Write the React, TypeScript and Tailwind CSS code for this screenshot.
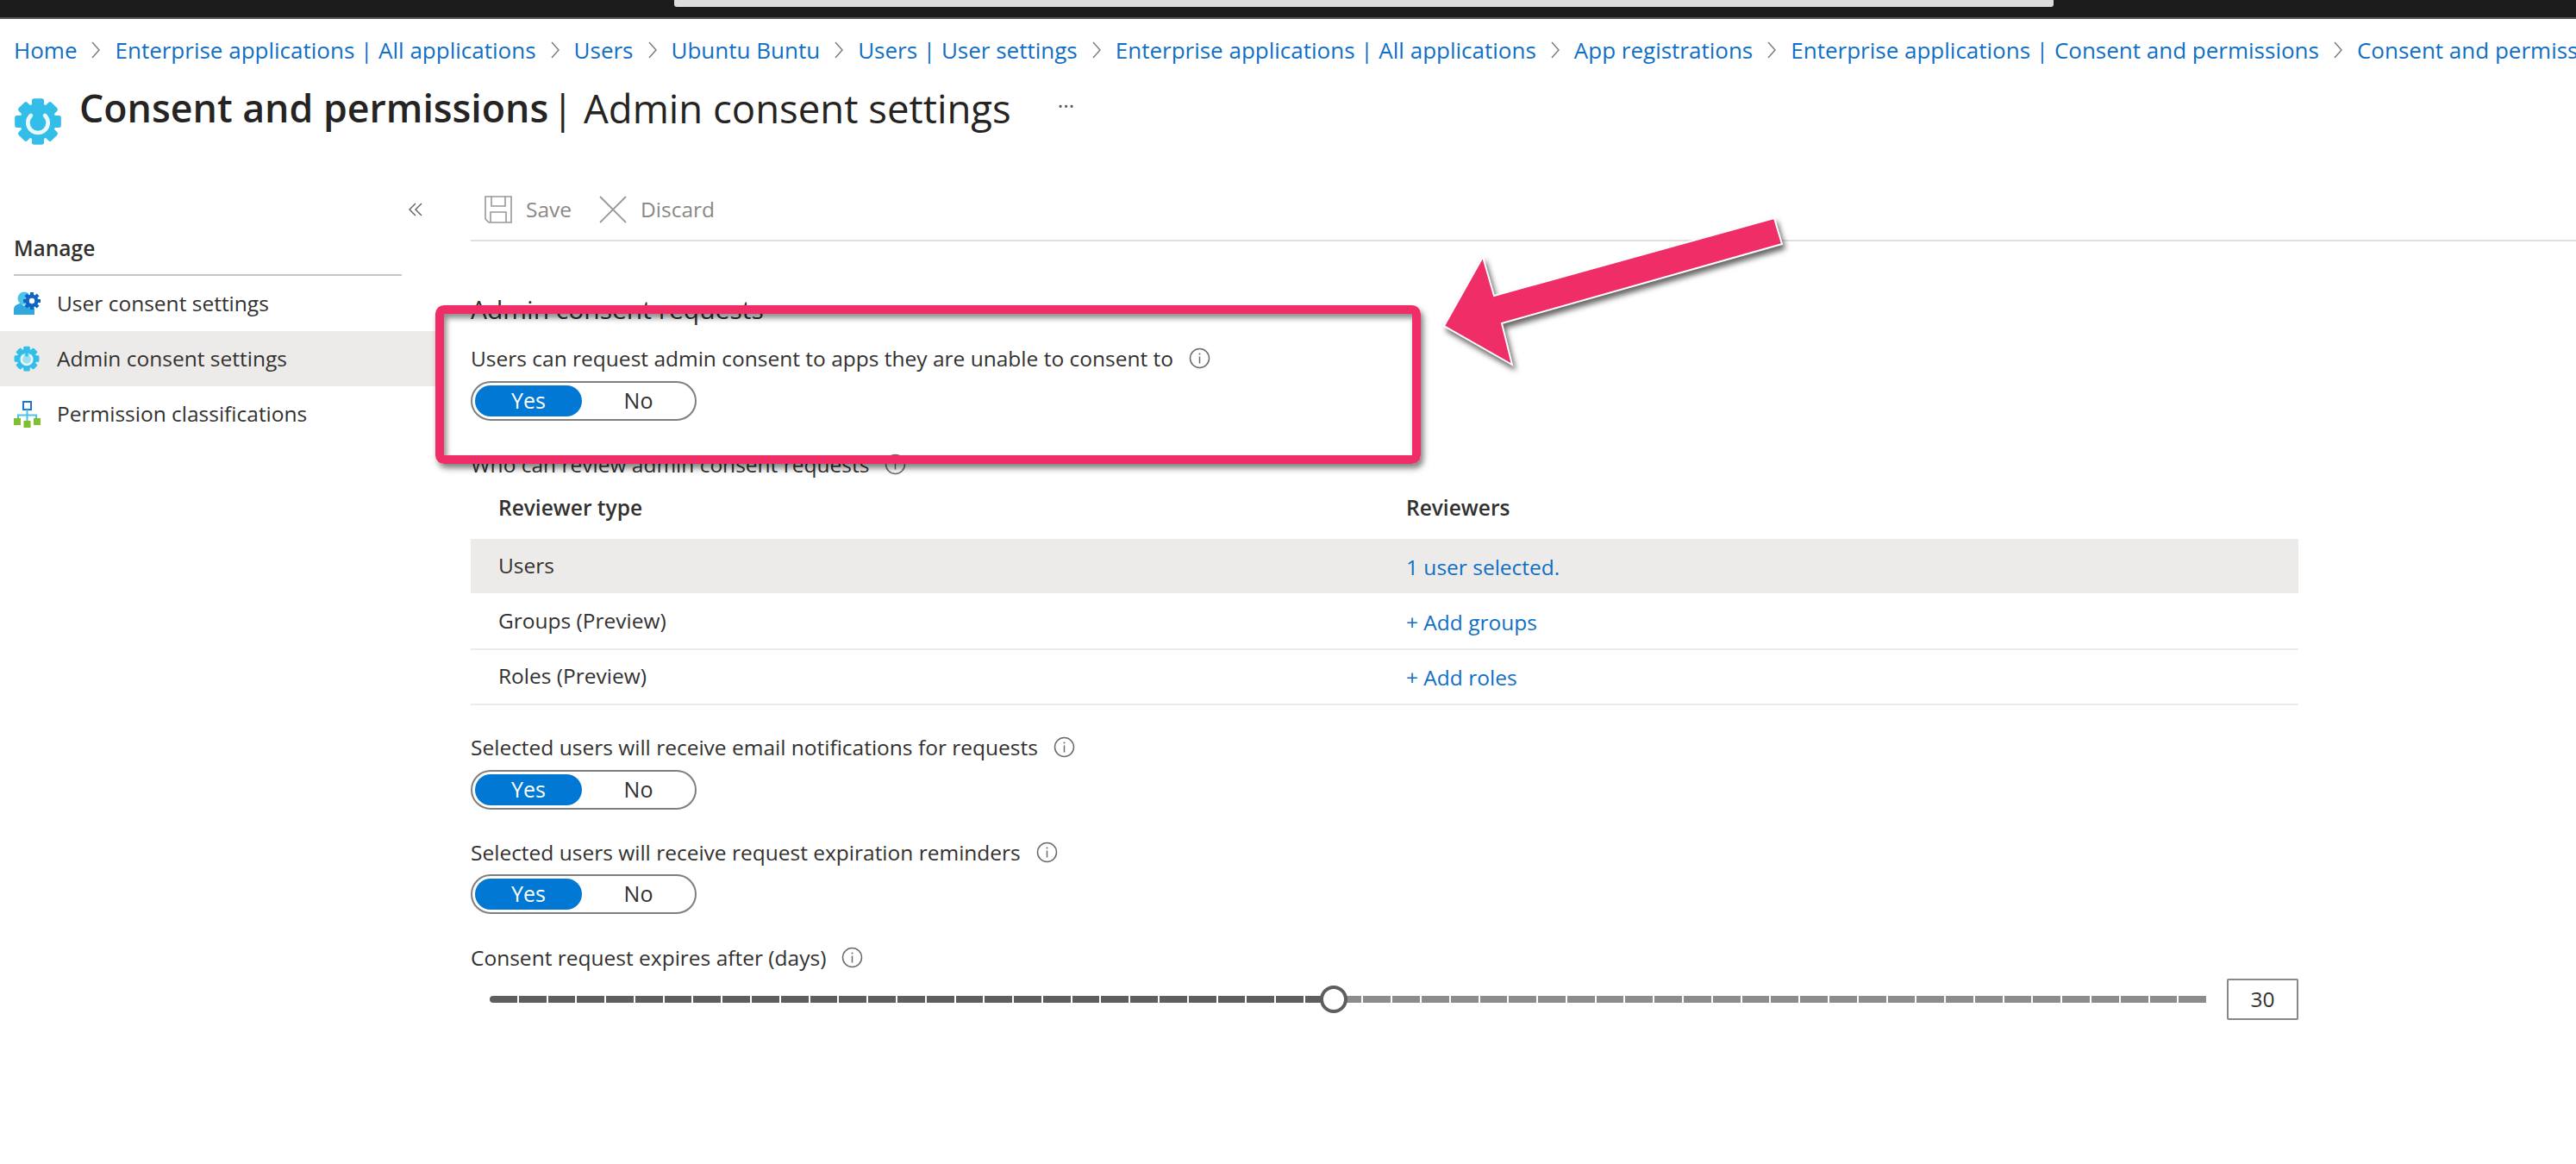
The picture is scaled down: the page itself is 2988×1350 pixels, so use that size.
const crumbs = [
  'Home',
  'Enterprise applications | All applications',
  'Users',
  'Ubuntu Buntu',
  'Users | User settings',
  'Enterprise applications | All applications',
  'App registrations',
  'Enterprise applications | Consent and permissions',
  'Consent and permissions',
];

const SEGMENTS = 59;
const VALUE_SEGMENTS = 29;

function Chevron() {
  return (
    <svg width="12" height="26" viewBox="0 0 12 26" fill="none" className="shrink-0">
      <path d="M2 4 L10 13 L2 22" stroke="#7a7a7a" strokeWidth="1.4" />
    </svg>
  );
}

function InfoIcon({ className = '' }: { className?: string }) {
  return (
    <svg width="25" height="25" viewBox="0 0 25 25" fill="none" className={className}>
      <circle cx="12.5" cy="12.5" r="11" stroke="#6b6b6b" strokeWidth="1.5" />
      <path d="M12.5 10.5 V18.5" stroke="#6b6b6b" strokeWidth="1.5" />
      <circle cx="12.5" cy="7.5" r="1" fill="#6b6b6b" />
    </svg>
  );
}

function GearIcon({ size, soft = false }: { size: number; soft?: boolean }) {
  const teeth = [0, 45, 90, 135];
  return (
    <svg width={size} height={size} viewBox="0 0 48 48">
      {teeth.map((a) => (
        <rect key={a} x="18" y="1" width="12" height="46" rx="2" fill="#32bee8" transform={`rotate(${a} 24 24)`} />
      ))}
      <circle cx="24" cy="24" r="18" fill="#32bee8" />
      {soft && <circle cx="24" cy="24" r="11" fill="#9fdff3" />}
      <path d="M17 18 A10 10 0 1 0 31 18" fill="none" stroke="#e9f9fe" strokeWidth="4" strokeLinecap="round" />
      <path d="M24 10 V20" stroke="#32bee8" strokeWidth="5" />
    </svg>
  );
}

function UserGearIcon() {
  return (
    <svg width="32" height="30" viewBox="0 0 32 30">
      <circle cx="12" cy="9" r="7.5" fill="#4cc3ea" />
      <path d="M0 28 V22 C0 17 5 15 8 15 L12 18 L16 15 C20 15 24 17 24 22 V28 Z" fill="#32a9dc" />
      <g transform="translate(21 12)">
        {[0, 45, 90, 135].map((a) => (
          <rect key={a} x="-2" y="-10" width="4" height="20" fill="#1264c4" transform={`rotate(${a})`} />
        ))}
        <circle r="7.5" fill="#1264c4" />
        <circle r="3.2" fill="#ffffff" />
      </g>
    </svg>
  );
}

function TreeIcon() {
  return (
    <svg width="32" height="32" viewBox="0 0 32 32" fill="none">
      <rect x="11" y="2" width="9" height="9" stroke="#1b78d0" strokeWidth="2" fill="#ffffff" />
      <path d="M15.500 11 V24 M5 22 V17.500 H26 V22" stroke="#4cc3ea" strokeWidth="2" />
      <rect x="0" y="21" width="8" height="8" fill="#7ec02e" />
      <rect x="11.500" y="24" width="8" height="8" fill="#7ec02e" />
      <rect x="23" y="21" width="8" height="8" fill="#7ec02e" />
    </svg>
  );
}

function YesNo() {
  return (
    <div className="flex h-[46px] w-[262px] items-center rounded-full border-2 border-[#7f7f7f] bg-white pl-[3px] text-[25px]">
      <div className="flex h-[36px] w-[125px] items-center justify-center rounded-full bg-[#0078d4] text-white">Yes</div>
      <div className="w-[132px] text-center text-[#323130]">No</div>
    </div>
  );
}

function Label({ text }: { text: string }) {
  return (
    <div className="flex h-10 items-center gap-[18px] whitespace-nowrap pb-[3px]">
      <span>{text}</span>
      <InfoIcon className="-mt-[2px] shrink-0" />
    </div>
  );
}

function NavItem({ icon, label, active = false }: { icon: React.ReactNode; label: string; active?: boolean }) {
  return (
    <div className={`flex h-16 items-center pl-4 ${active ? 'bg-[#edebe9]' : ''}`}>
      <div className="flex w-[50px] items-center">{icon}</div>
      <span className="pt-[1px]">{label}</span>
    </div>
  );
}

export default function App() {
  const thumbLeft = (VALUE_SEGMENTS / SEGMENTS) * 100;

  return (
    <div className="relative h-[1350px] w-[2988px] overflow-hidden bg-white text-[24.5px] text-[#323130] [font-family:'Open_Sans',sans-serif]">
      {/* top strip */}
      <div className="h-[22px] border-b-2 border-[#555] bg-[#1c1c1c] pl-[782px]">
        <div className="h-2 w-[1600px] rounded-b-[3px] bg-[#dcdcdc]" />
      </div>

      {/* breadcrumb */}
      <div className="flex h-[72px] items-center gap-4 pl-[16px] whitespace-nowrap text-[26px] text-[#0f6fc5]">
        {crumbs.map((c, i) => (
          <div key={i} className="flex items-center gap-4">
            {i > 0 && <Chevron />}
            <span>{c}</span>
          </div>
        ))}
      </div>

      {/* title */}
      <div className="flex h-[106px] items-start pl-[16px]">
        <div className="mt-[19px] w-[76px]">
          <GearIcon size={56} />
        </div>
        <h1 className="flex h-[62px] items-center whitespace-nowrap text-[#252423]">
          <span className="text-[44.7px] font-semibold">Consent and permissions</span>
          <span className="ml-1 text-[45.5px]">| Admin consent settings</span>
        </h1>
        <span className="ml-[54px] mt-[10px] text-[25px] text-[#555]">···</span>
      </div>

      <div className="flex">
        {/* sidebar */}
        <aside className="w-[505px] shrink-0">
          <div className="flex h-[62px] items-center justify-end pr-[14px] pt-[24px]">
            <svg width="18" height="18" viewBox="0 0 18 18" fill="none">
              <path d="M9 2 L2 9 L9 16 M16 2 L9 9 L16 16" stroke="#5f5f5f" strokeWidth="1.4" />
            </svg>
          </div>
          <div className="ml-4 mr-[39px] flex h-[58px] items-center border-b-2 border-[#c8c6c4] pb-1 font-semibold">Manage</div>
          <NavItem icon={<UserGearIcon />} label="User consent settings" />
          <NavItem icon={<GearIcon size={30} soft />} label="Admin consent settings" active />
          <NavItem icon={<TreeIcon />} label="Permission classifications" />
        </aside>

        {/* content */}
        <main className="min-w-0 flex-1 pl-[41px]">
          <div className="flex h-20 items-center border-b-2 border-[#e1dfdd] pl-4 pt-2 text-[#8a8886]">
            <svg width="32" height="32" viewBox="0 0 32 32" fill="none" className="mr-4">
              <path d="M1 1 H31 V31 H5 L1 27 Z M8 1 V12 H24 V1 M7 31 V19 H25 V31" stroke="#9a9896" strokeWidth="1.6" />
            </svg>
            <span>Save</span>
            <svg width="32" height="32" viewBox="0 0 32 32" fill="none" className="ml-8 mr-4">
              <path d="M1 1 L31 31 M31 1 L1 31" stroke="#9a9896" strokeWidth="1.8" />
            </svg>
            <span>Discard</span>
          </div>

          <div className="w-[2120px]">
            <h2 className="mt-[58px] flex h-10 items-center text-[30px]">Admin consent requests</h2>

            <div className="mt-5">
              <Label text="Users can request admin consent to apps they are unable to consent to" />
            </div>
            <div className="mt-1">
              <YesNo />
            </div>

            <div className="mt-[33px]">
              <Label text="Who can review admin consent requests" />
            </div>

            {/* reviewers table */}
            <div className="grid h-16 grid-cols-[1085px_1fr] items-center pb-2 font-semibold">
              <span className="pl-8">Reviewer type</span>
              <span>Reviewers</span>
            </div>
            <div className="grid h-[63px] grid-cols-[1085px_1fr] items-center bg-[#edebe9]">
              <span className="pl-8">Users</span>
              <span className="pt-1 text-[#0f6fc5]">1 user selected.</span>
            </div>
            <div className="grid h-[66px] grid-cols-[1085px_1fr] items-center border-b-2 border-[#edebe9]">
              <span className="pl-8">Groups (Preview)</span>
              <span className="pt-1 text-[#0f6fc5]">+ Add groups</span>
            </div>
            <div className="grid h-16 grid-cols-[1085px_1fr] items-center border-b-2 border-[#edebe9] pb-[1px]">
              <span className="pl-8">Roles (Preview)</span>
              <span className="pt-1 text-[#0f6fc5]">+ Add roles</span>
            </div>

            <div className="mt-[31px]">
              <Label text="Selected users will receive email notifications for requests" />
            </div>
            <div className="mt-1">
              <YesNo />
            </div>

            <div className="mt-8">
              <Label text="Selected users will receive request expiration reminders" />
            </div>
            <div className="mt-[3px]">
              <YesNo />
            </div>

            <div className="mt-[33px]">
              <Label text="Consent request expires after (days)" />
            </div>

            {/* slider */}
            <div className="mt-[2px] flex items-center gap-6 pl-[22px]">
              <div className="relative flex h-2 flex-1 gap-[2px]">
                {Array.from({ length: SEGMENTS }, (_, i) => (
                  <div
                    key={i}
                    className={`flex-1 first:rounded-l-full last:rounded-r-full ${i < VALUE_SEGMENTS ? 'bg-[#5e5e5e]' : 'bg-[#8c8c8c]'}`}
                  />
                ))}
                <div
                  className="absolute top-1/2 h-[32px] w-[32px] -translate-x-1/2 -translate-y-1/2 rounded-full border-[4px] border-[#605e5c] bg-white"
                  style={{ left: `${thumbLeft}%` }}
                />
              </div>
              <div className="flex h-12 w-[83px] items-center justify-center rounded-[2px] border-2 border-[#8a8886]">30</div>
            </div>
          </div>
        </main>
      </div>

      {/* annotation overlay */}
      <div className="absolute left-[505px] top-[354px] h-[184px] w-[1143px] rounded-[10px] border-[10px] border-[#ef2d66] shadow-[3px_5px_7px_rgba(0,0,0,0.5),inset_3px_5px_6px_rgba(0,0,0,0.45)]" />
      <svg
        width="2988"
        height="1350"
        viewBox="0 0 2988 1350"
        className="pointer-events-none absolute left-0 top-0 drop-shadow-[3px_5px_3px_rgba(0,0,0,0.6)]"
      >
        <polygon
          points="2058,253 2067,283 1742,375 1754,423 1675,378 1720,298 1733,343"
          fill="#ef2d66"
          stroke="#ffffff"
          strokeWidth="2"
        />
      </svg>
    </div>
  );
}
